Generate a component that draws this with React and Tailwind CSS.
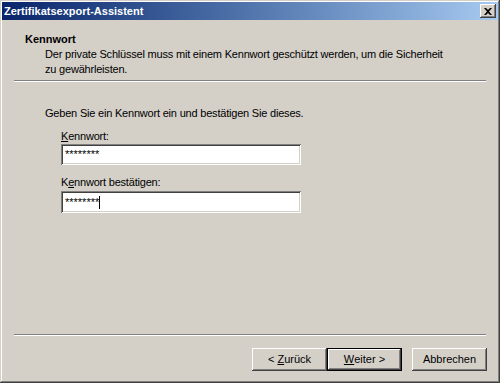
export default function App() {
  const font = { fontFamily: '"Liberation Sans", Arial, sans-serif' }

  const raised =
    "bg-[#d4d0c8] shadow-[inset_-1px_-1px_#404040,inset_1px_1px_#ffffff,inset_-2px_-2px_#808080,inset_2px_2px_#d4d0c8]"
  const sunken =
    "bg-white shadow-[inset_1px_1px_#808080,inset_-1px_-1px_#ffffff,inset_2px_2px_#404040,inset_-2px_-2px_#d4d0c8]"

  return (
    <div
      style={font}
      className="w-[500px] h-[383px] flex flex-col p-[2px] text-[11px] text-black bg-[#d4d0c8] shadow-[inset_-1px_-1px_#404040,inset_1px_1px_#d4d0c8,inset_-2px_-2px_#808080,inset_2px_2px_#ffffff] overflow-hidden"
    >
      {/* title bar */}
      <div className="h-[18px] flex items-center justify-between pl-[2px] pr-[2px] bg-gradient-to-r from-[#0a246a] to-[#a6caf0]">
        <span className="text-white font-bold text-[11px] leading-none">Zertifikatsexport-Assistent</span>
        <div className={`w-[16px] h-[14px] flex items-center justify-center ${raised}`}>
          <svg width="8" height="7" viewBox="0 0 8 7">
            <path d="M0 0h2l2 2 2-2h2L5 3.5 8 7H6L4 5 2 7H0l3-3.5z" fill="#000" />
          </svg>
        </div>
      </div>

      {/* header */}
      <div className="pl-[23px] pt-[12px] tracking-[-0.2px]">
        <div className="font-bold leading-[14px] tracking-normal">Kennwort</div>
        <div className="pl-[20px] pt-[1px] leading-[15px]">
          <div>Der private Schlüssel muss mit einem Kennwort geschützt werden, um die Sicherheit</div>
          <div>zu gewährleisten.</div>
        </div>
      </div>
      <div className="mx-[12px] mt-[3px] h-[2px] border-t border-[#808080] border-b border-b-white" />

      {/* body */}
      <div className="pl-[43px] pt-[24px] flex flex-col tracking-[-0.2px]">
        <div className="leading-[14px]">Geben Sie ein Kennwort ein und bestätigen Sie dieses.</div>
        <div className="pl-[16px] pt-[9px] flex flex-col">
          <div className="leading-[14px]">
            <span className="underline">K</span>ennwort:
          </div>
          <div className={`mt-[1px] w-[240px] h-[21px] flex items-center pl-[4px] tracking-normal ${sunken}`}>
            <span className="leading-none">********</span>
          </div>
          <div className="mt-[10px] leading-[14px]">
            K<span className="underline">e</span>nnwort bestätigen:
          </div>
          <div className={`mt-[2px] w-[240px] h-[22px] flex items-center pl-[4px] tracking-normal ${sunken}`}>
            <span className="leading-none">********</span>
            <span className="w-px h-[13px] bg-black" />
          </div>
        </div>
      </div>

      <div className="flex-1" />

      {/* footer */}
      <div className="mx-[12px] h-[2px] border-t border-[#808080] border-b border-b-white" />
      <div className="flex justify-end pr-[11px] pt-[12px] pb-[10px]">
        <div className={`w-[75px] h-[23px] flex items-center justify-center ${raised}`}>
          &lt;&nbsp;<span className="underline">Z</span>urück
        </div>
        <div className="w-[75px] h-[23px] border border-black flex">
          <div className="flex-1 flex items-center justify-center bg-[#d4d0c8] shadow-[inset_-1px_-1px_#404040,inset_1px_1px_#ffffff,inset_-2px_-2px_#808080]">
            <span className="underline">W</span>eiter &gt;
          </div>
        </div>
        <div className={`ml-[10px] w-[75px] h-[23px] flex items-center justify-center ${raised}`}>Abbrechen</div>
      </div>
    </div>
  )
}
